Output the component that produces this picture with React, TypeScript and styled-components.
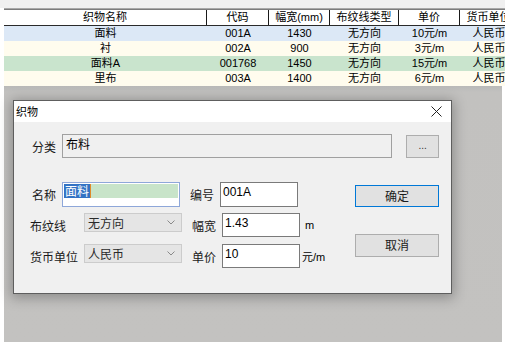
import React from 'react';
import styled, { createGlobalStyle } from 'styled-components';

const GlobalStyle = createGlobalStyle`
  html, body {
    margin: 0;
    padding: 0;
    background: #ffffff;
  }
  body {
    font-family: "Liberation Sans", "Noto Sans CJK SC", sans-serif;
    font-size: 12px;
    color: #000;
  }
`;

interface IFabric {
  name: string;
  code: string;
  width: string;
  grain: string;
  price: string;
  currency: string;
  color: string;
}

const columns = ['织物名称', '代码', '幅宽(mm)', '布纹线类型', '单价', '货币单位'];

const fabrics: IFabric[] = [
  { name: '面料', code: '001A', width: '1430', grain: '无方向', price: '10元/m', currency: '人民币', color: '#dce8f6' },
  { name: '衬', code: '002A', width: '900', grain: '无方向', price: '3元/m', currency: '人民币', color: '#fffcee' },
  { name: '面料A', code: '001768', width: '1450', grain: '无方向', price: '15元/m', currency: '人民币', color: '#c9e4cd' },
  { name: '里布', code: '003A', width: '1400', grain: '无方向', price: '6元/m', currency: '人民币', color: '#fffcee' },
];

const Chevron = () => (
  <svg width="8" height="5" viewBox="0 0 8 5">
    <path d="M0.5 0.5 L4 4 L7.5 0.5" fill="none" stroke="#8a8a8a" strokeWidth="1" />
  </svg>
);

const CloseIcon = () => (
  <svg width="11" height="11" viewBox="0 0 11 11">
    <path d="M0.5 0.5 L10.5 10.5 M10.5 0.5 L0.5 10.5" stroke="#222" strokeWidth="1" />
  </svg>
);

const App: React.FC = () => {
  return (
    <>
      <GlobalStyle />
      <Screen>
        <GridFrame>
          <HeaderRow>
            {columns.map((c) => (
              <HeaderCell key={c}>{c}</HeaderCell>
            ))}
          </HeaderRow>
          {fabrics.map((f) => (
            <DataRow key={f.name} bg={f.color}>
              <Cell>{f.name}</Cell>
              <Cell>{f.code}</Cell>
              <Cell>{f.width}</Cell>
              <Cell>{f.grain}</Cell>
              <Cell>{f.price}</Cell>
              <Cell>{f.currency}</Cell>
            </DataRow>
          ))}
          <EmptyArea />
        </GridFrame>

        <Dialog>
          <TitleBar>
            <Title>织物</Title>
            <CloseButton>
              <CloseIcon />
            </CloseButton>
          </TitleBar>
          <Body>
            <CategoryRow>
              <Label width={30}>分类</Label>
              <ReadOnlyBox>布料</ReadOnlyBox>
              <BrowseButton>...</BrowseButton>
            </CategoryRow>

            <FormArea>
              <Fields>
                <FieldRow height={25}>
                  <Label width={30} offset={2}>名称</Label>
                  <NameInput>
                    <NameHighlight>
                      <Selected>面料</Selected>
                      <Caret />
                    </NameHighlight>
                  </NameInput>
                  <Label width={30} offset={10}>编号</Label>
                  <TextBox height={25}>001A</TextBox>
                </FieldRow>
                <FieldRow height={24} top={6}>
                  <Label width={54}>布纹线</Label>
                  <Select>
                    <span>无方向</span>
                    <Chevron />
                  </Select>
                  <Label width={30} offset={10}>幅宽</Label>
                  <TextBox height={24}>1.43</TextBox>
                  <Unit offset={5}>m</Unit>
                </FieldRow>
                <FieldRow height={24} top={7}>
                  <Label width={54}>货币单位</Label>
                  <Select>
                    <span>人民币</span>
                    <Chevron />
                  </Select>
                  <Label width={30} offset={10}>单价</Label>
                  <TextBox height={24}>10</TextBox>
                  <Unit offset={2}>元/m</Unit>
                </FieldRow>
              </Fields>
              <Buttons>
                <DialogButton primary height={22}>确定</DialogButton>
                <DialogButton height={23} top={27}>取消</DialogButton>
              </Buttons>
            </FormArea>
          </Body>
        </Dialog>
      </Screen>
    </>
  );
};

export default App;

const Screen = styled.div`
  position: relative;
  width: 505px;
  height: 342px;
  box-sizing: border-box;
  padding: 8px 0 0 4px;
  background: linear-gradient(#f0f0f0 0, #f0f0f0 8px, #ffffff 8px);
  display: flex;
  flex-direction: column;
  overflow: hidden;
`;

const GridFrame = styled.div`
  flex: 1;
  display: flex;
  flex-direction: column;
  border-top: 1px solid #a8a8a8;
  overflow: hidden;
`;

const gridColumns = '203px 62px 61px 69px 61px 58px';

const HeaderRow = styled.div`
  display: grid;
  grid-template-columns: ${gridColumns};
  height: 15px;
  background: #ffffff;
  border-top: 1px solid #7c7c7c;
  border-bottom: 1px solid #2a2a2a;
  box-sizing: content-box;
`;

const HeaderCell = styled.div`
  border-right: 1px solid #1a1a1a;
  font-size: 11px;
  line-height: 15px;
  text-align: center;
  white-space: nowrap;
  overflow: hidden;
  font-family: "Liberation Sans", "Noto Sans CJK SC", sans-serif;
`;

const DataRow = styled.div<{ bg: string }>`
  display: grid;
  grid-template-columns: ${gridColumns};
  height: 15px;
  background: ${(p) => p.bg};
`;

const Cell = styled.div`
  font-size: 11px;
  line-height: 15px;
  text-align: center;
  white-space: nowrap;
  overflow: hidden;
`;

const EmptyArea = styled.div`
  flex: 1;
  margin-right: 3px;
  background: linear-gradient(#b9b9b8 0, #c2c1bf 6px, #c3c2c0 100%);
`;

const Dialog = styled.div`
  position: absolute;
  left: 13px;
  top: 100px;
  width: 439px;
  height: 194px;
  box-sizing: border-box;
  border: 1px solid #5e5e5e;
  background: #f0f0f0;
  box-shadow: 0 2px 12px 2px rgba(0, 0, 0, 0.28);
  display: flex;
  flex-direction: column;
`;

const TitleBar = styled.div`
  height: 21px;
  background: #ffffff;
  display: flex;
  align-items: center;
  justify-content: space-between;
  padding: 0 9px 0 2px;
`;

const Title = styled.span`
  font-family: "Noto Sans CJK SC", sans-serif;
  font-size: 11px;
  line-height: 21px;
`;

const CloseButton = styled.span`
  display: flex;
  align-items: center;
`;

const Body = styled.div`
  flex: 1;
  padding: 12px 12px 0 18px;
  display: flex;
  flex-direction: column;
`;

const CategoryRow = styled.div`
  display: flex;
  align-items: flex-start;
`;

const Label = styled.span<{ width: number; offset?: number }>`
  width: ${(p) => p.width}px;
  margin-left: ${(p) => p.offset || 0}px;
  flex-shrink: 0;
  font-family: "Noto Sans CJK SC", sans-serif;
  font-size: 12px;
  color: #1a1a1a;
  align-self: center;
  white-space: nowrap;
`;

const ReadOnlyBox = styled.div`
  width: 331px;
  height: 24px;
  box-sizing: border-box;
  border: 1px solid #a0a0a0;
  background: #f0f0f0;
  padding: 0 3px;
  font-family: "Noto Sans CJK SC", sans-serif;
  font-size: 12px;
  line-height: 17px;
`;

const BrowseButton = styled.div`
  width: 33px;
  height: 23px;
  box-sizing: border-box;
  margin: 1px 0 0 14px;
  border: 1px solid #adadad;
  background: #e1e1e1;
  text-align: center;
  font-size: 10px;
  line-height: 19px;
  color: #333;
`;

const FormArea = styled.div`
  display: flex;
  margin-top: 24px;
`;

const Fields = styled.div`
  display: flex;
  flex-direction: column;
  width: 323px;
`;

const FieldRow = styled.div<{ height: number; top?: number }>`
  display: flex;
  align-items: flex-start;
  height: ${(p) => p.height}px;
  margin-top: ${(p) => p.top || 0}px;
  margin-left: -2px;
`;

const NameInput = styled.div`
  width: 118px;
  height: 25px;
  box-sizing: border-box;
  border: 1px solid #8ea7d9;
  background: #ffffff;
  padding: 1px;
`;

const NameHighlight = styled.div`
  height: 14px;
  background: #c8e4c9;
  display: flex;
  align-items: stretch;
`;

const Selected = styled.span`
  background: #3373c4;
  color: #ffffff;
  font-family: "Noto Sans CJK SC", sans-serif;
  font-size: 12px;
  line-height: 14px;
  padding: 0 1px;
`;

const Caret = styled.span`
  width: 1px;
  background: #e08a2a;
`;

const TextBox = styled.div<{ height: number }>`
  width: 78px;
  height: ${(p) => p.height}px;
  box-sizing: border-box;
  border: 1px solid #7a7a7a;
  background: #ffffff;
  padding: 0 2px;
  font-size: 12px;
  line-height: 18px;
`;

const Select = styled.div`
  width: 98px;
  height: 19px;
  box-sizing: border-box;
  border: 1px solid #cccccc;
  background: #e5e5e5;
  display: flex;
  align-items: center;
  justify-content: space-between;
  padding: 0 6px 0 3px;
  font-family: "Noto Sans CJK SC", sans-serif;
  font-size: 12px;
  color: #2a2a2a;
  span {
    line-height: 16px;
  }
`;

const Unit = styled.span<{ offset: number }>`
  margin-left: ${(p) => p.offset}px;
  align-self: center;
  font-size: 11px;
  font-family: "Liberation Sans", "Noto Sans CJK SC", sans-serif;
`;

const Buttons = styled.div`
  display: flex;
  flex-direction: column;
  margin-left: 0;
  padding-top: 3px;
`;

const DialogButton = styled.div<{ primary?: boolean; height: number; top?: number }>`
  width: 84px;
  height: ${(p) => p.height}px;
  box-sizing: border-box;
  margin-top: ${(p) => p.top || 0}px;
  border: 1px solid ${(p) => (p.primary ? '#0078d7' : '#adadad')};
  background: #e1e1e1;
  text-align: center;
  font-family: "Noto Sans CJK SC", sans-serif;
  font-size: 12px;
  line-height: ${(p) => p.height - 3}px;
  color: #1a1a1a;
`;
